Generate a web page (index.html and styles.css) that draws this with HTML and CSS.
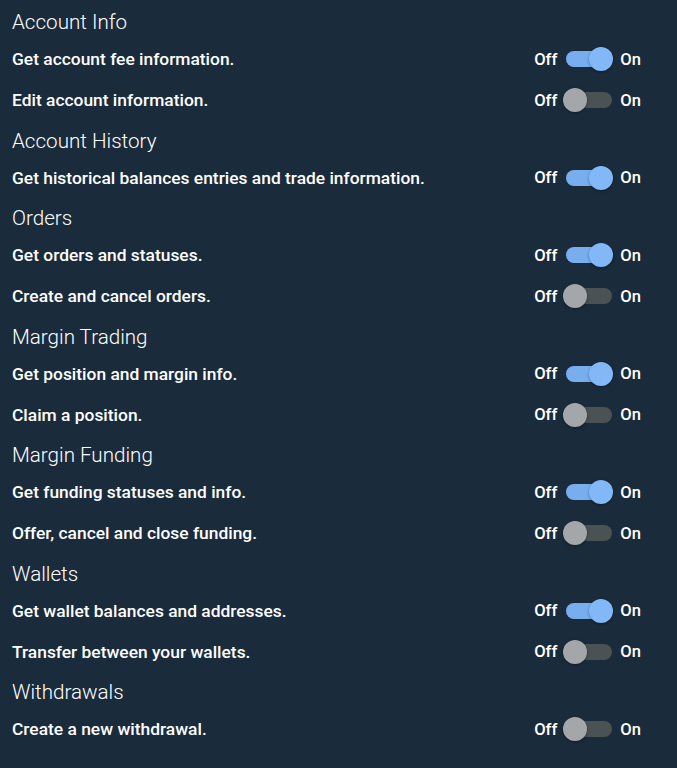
FILE: index.html
```html
<!DOCTYPE html>
<html lang="en">
<head>
    <meta charset="UTF-8">
    <meta name="viewport" content="width=device-width, initial-scale=1.0">
    <title>API Key Permissions</title>
    <link rel="stylesheet" href="styles.css">
</head>
<body>
    <main class="permissions" id="permissions">
        <!-- Sections will be dynamically inserted here -->
    </main>

    <script>
        const sections = [
            { title: 'Account Info', items: [
                { label: 'Get account fee information.', on: true },
                { label: 'Edit account information.', on: false }
            ]},
            { title: 'Account History', items: [
                { label: 'Get historical balances entries and trade information.', on: true }
            ]},
            { title: 'Orders', items: [
                { label: 'Get orders and statuses.', on: true },
                { label: 'Create and cancel orders.', on: false }
            ]},
            { title: 'Margin Trading', items: [
                { label: 'Get position and margin info.', on: true },
                { label: 'Claim a position.', on: false }
            ]},
            { title: 'Margin Funding', items: [
                { label: 'Get funding statuses and info.', on: true },
                { label: 'Offer, cancel and close funding.', on: false }
            ]},
            { title: 'Wallets', items: [
                { label: 'Get wallet balances and addresses.', on: true },
                { label: 'Transfer between your wallets.', on: false }
            ]},
            { title: 'Withdrawals', items: [
                { label: 'Create a new withdrawal.', on: false }
            ]}
        ];

        function renderSections() {
            const root = document.getElementById('permissions');
            root.innerHTML = '';
            sections.forEach(section => {
                const block = document.createElement('section');
                block.className = 'section';
                block.innerHTML = `<h2 class="section-title">${section.title}</h2>`;
                section.items.forEach(item => {
                    const row = document.createElement('div');
                    row.className = 'row';
                    row.innerHTML = `
                        <span class="row-label">${item.label}</span>
                        <label class="toggle">
                            <span class="toggle-text">Off</span>
                            <span class="switch ${item.on ? 'is-on' : ''}">
                                <span class="track"></span>
                                <span class="thumb"></span>
                            </span>
                            <span class="toggle-text">On</span>
                        </label>
                    `;
                    row.querySelector('.switch').addEventListener('click', function() {
                        item.on = !item.on;
                        this.classList.toggle('is-on', item.on);
                    });
                    block.appendChild(row);
                });
                root.appendChild(block);
            });
        }

        renderSections();
    </script>
</body>
</html>
```

FILE: styles.css
```css
body {
    font-family: Roboto, "Liberation Sans", sans-serif;
    margin: 0;
    padding: 0;
    background-color: #1a2b3c;
    color: #fff;
}
.permissions {
    padding: 2px 36px 0 12px;
}
.section-title {
    box-sizing: border-box;
    margin: 0;
    height: 36.5px;
    padding-top: 4px;
    line-height: 32px;
    font-size: 20.6px;
    font-weight: 300;
}
.row {
    display: flex;
    align-items: center;
    justify-content: space-between;
    height: 41px;
}
.row-label {
    font-size: 17.4px;
    font-weight: 500;
}
.toggle {
    display: flex;
    align-items: center;
    gap: 6px;
    font-size: 16.6px;
    font-weight: 500;
}
.switch {
    position: relative;
    width: 51px;
    height: 24px;
    cursor: pointer;
}
.track {
    position: absolute;
    left: 3px;
    top: 4px;
    width: 46px;
    height: 16px;
    border-radius: 8px;
    background: #4b5254;
}
.thumb {
    position: absolute;
    left: 0;
    top: 0;
    width: 24px;
    height: 24px;
    border-radius: 50%;
    background: #a4a7aa;
    box-shadow: 0 1px 3px rgba(0, 0, 0, 0.35);
    transition: left 0.15s;
}
.switch.is-on .track {
    background: #78aeee;
}
.switch.is-on .thumb {
    left: 26px;
    background: #82b8f8;
}
```
